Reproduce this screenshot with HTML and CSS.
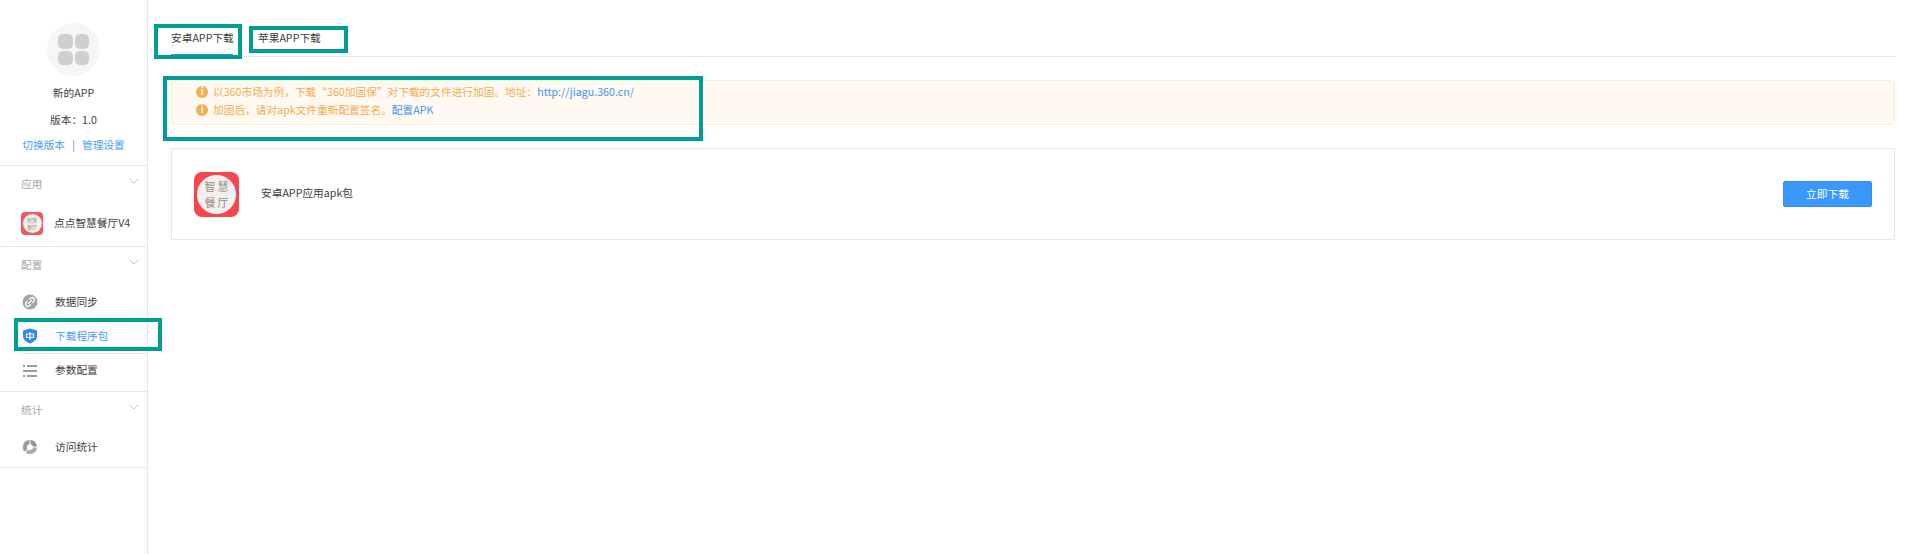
FILE: index.html

```html
<!DOCTYPE html>
<html lang="zh-CN">
<head>
    <meta charset="UTF-8">
    <meta name="viewport" content="width=device-width, initial-scale=1.0">
    <title>下载程序包</title>
    <link rel="stylesheet" href="styles.css">
</head>
<body>
    <div class="page">
        <aside class="sidebar">
            <div class="app-head">
                <div class="app-logo">
                    <span></span><span></span><span></span><span></span>
                </div>
                <div class="app-name">新的APP</div>
                <div class="app-version">版本：1.0</div>
                <div class="app-links"><a>切换版本</a><i>|</i><a>管理设置</a></div>
            </div>

            <section class="side-group group-app">
                <div class="group-title">应用
                    <svg class="chevron" viewBox="0 0 10 6" width="10" height="6"><path d="M0.5 0.5 L5 5 L9.5 0.5" fill="none" stroke="#c4c4c4"/></svg>
                </div>
                <div class="side-item">
                    <div class="mini-icon"><span>智慧<br>餐厅</span></div>
                    <span class="side-label">点点智慧餐厅V4</span>
                </div>
            </section>

            <section class="side-group group-config">
                <div class="group-title">配置
                    <svg class="chevron" viewBox="0 0 10 6" width="10" height="6"><path d="M0.5 0.5 L5 5 L9.5 0.5" fill="none" stroke="#c4c4c4"/></svg>
                </div>
                <div class="side-item">
                    <svg class="side-icon" viewBox="0 0 16 16">
                        <circle cx="8" cy="8" r="7.5" fill="#a3a3a3"/>
                        <path d="M7 5.5 L9 3.8 Q10.5 3 11.8 4.2 Q13 5.5 12.2 7 L10.5 9 M9 10.5 L7 12.2 Q5.5 13 4.2 11.8 Q3 10.5 3.8 9 L5.5 7 M6 10 L10 6" fill="none" stroke="#fff" stroke-width="1.3"/>
                    </svg>
                    <span class="side-label">数据同步</span>
                </div>
                <div class="side-item active">
                    <svg class="side-icon" viewBox="0 0 16 16">
                        <path d="M8 0.500 L15 2.500 V8.500 Q15 12.500 8 15.500 Q1 12.500 1 8.500 V2.500 Z" fill="#2f87f5"/>
                        <path d="M4.500 6 H11.500 V9.500 H4.500 Z M8 4 V12" fill="none" stroke="#fff" stroke-width="1.2"/>
                    </svg>
                    <span class="side-label">下载程序包</span>
                </div>
                <div class="side-item item-line">
                    <svg class="side-icon" viewBox="0 0 16 16">
                        <path d="M1 3 H3 M5 3 H15 M1 8 H15 M1 13 H3 M5 13 H15" stroke="#9d9d9d" stroke-width="1.8"/>
                    </svg>
                    <span class="side-label">参数配置</span>
                </div>
            </section>

            <section class="side-group group-stat">
                <div class="group-title">统计
                    <svg class="chevron" viewBox="0 0 10 6" width="10" height="6"><path d="M0.5 0.5 L5 5 L9.5 0.5" fill="none" stroke="#c4c4c4"/></svg>
                </div>
                <div class="side-item">
                    <svg class="side-icon" viewBox="0 0 16 16">
                        <path d="M8.500 1 A7 7 0 0 1 15 7.500 H11 A3.500 3.500 0 0 0 8.500 5 Z" fill="#8f8f8f"/>
                        <path d="M15 8.500 A7 7 0 0 1 3.500 13.500 L6 10.800 A3.500 3.500 0 0 0 11 8.500 Z" fill="#b5a89c"/>
                        <path d="M2.800 12.800 A7 7 0 0 1 7.500 1 V5 A3.500 3.500 0 0 0 5.300 10 Z" fill="#9a9a9a"/>
                    </svg>
                    <span class="side-label">访问统计</span>
                </div>
            </section>
        </aside>

        <main class="content">
            <div class="tabs">
                <div class="tab current">安卓APP下载</div>
                <div class="tab">苹果APP下载</div>
            </div>

            <div class="notice">
                <p><b class="notice-dot">i</b>以360市场为例，下载“360加固保”对下载的文件进行加固。地址：<a>http://jiagu.360.cn/</a></p>
                <p><b class="notice-dot">i</b>加固后，请对apk文件重新配置签名。<a>配置APK</a></p>
            </div>

            <div class="package-card">
                <div class="package-icon"><span>智慧</span><span>餐厅</span></div>
                <div class="package-name">安卓APP应用apk包</div>
                <button class="download-btn">立即下载</button>
            </div>
        </main>
    </div>

    <!-- teal annotation boxes drawn on top of the screenshot -->
    <div class="mark mark-tab1"></div>
    <div class="mark mark-tab2"></div>
    <div class="mark mark-notice"></div>
    <div class="mark mark-menu"></div>
</body>
</html>
```

FILE: styles.css

```css
* {
    box-sizing: border-box;
}

html, body {
    margin: 0;
    padding: 0;
    height: 100%;
    background-color: #fff;
    overflow: hidden;
}

body {
    font-family: "Noto Sans CJK SC", "Open Sans", sans-serif;
    font-size: 10.7px;
    color: #3d3d3d;
}

.page {
    display: flex;
    height: 554px;
}

/* sidebar */
.sidebar {
    width: 148px;
    flex: none;
    border-right: 1px solid #e7e7e7;
}

.app-head {
    height: 166px;
    padding-top: 23px;
    border-bottom: 1px solid #e7e7e7;
    text-align: center;
    line-height: 16px;
}

.app-logo {
    width: 53px;
    height: 53px;
    margin: 0 auto 9px;
    padding: 11px;
    border-radius: 50%;
    background-color: #f5f6f7;
    display: grid;
    grid-template-columns: 1fr 1fr;
    gap: 2px;
}

.app-logo span {
    border-radius: 5px;
    background-color: #cfcfcf;
}

.app-name {
    margin-bottom: 11px;
}

.app-version {
    margin-bottom: 9px;
}

.app-links a {
    color: #4d9cf8;
}

.app-links i {
    margin: 0 7px;
    font-style: normal;
    color: #4d9cf8;
}

.side-group {
    border-bottom: 1px solid #e7e7e7;
    padding-left: 21px;
}

.group-app {
    height: 81px;
}

.group-app .group-title {
    height: 40px;
}

.group-config {
    height: 145px;
}

.group-stat {
    height: 76px;
}

.group-title {
    height: 38px;
    padding-top: 9px;
    padding-right: 8px;
    color: #a5a5a5;
    line-height: 17px;
    display: flex;
    justify-content: space-between;
    align-items: flex-start;
}

.chevron {
    margin-top: 3px;
}

.side-item {
    height: 34px;
    display: flex;
    align-items: center;
    gap: 17px;
}

.side-label {
    margin-bottom: 2px;
}

.active {
    color: #4d9cf8;
}

.item-line {
    border-top: 1px solid #e7e7e7;
}

.side-icon {
    width: 16px;
    height: 16px;
    margin-left: 1px;
    flex: none;
}

.mini-icon {
    width: 22px;
    height: 23px;
    margin-right: -6px;
    flex: none;
    border-radius: 4px;
    background-color: #f5575c;
    display: flex;
    align-items: center;
    justify-content: center;
}

.mini-icon span {
    width: 19px;
    height: 19px;
    border-radius: 50%;
    background-color: #f1eeec;
    color: #a08a80;
    font-size: 5px;
    line-height: 7px;
    padding-top: 2px;
    text-align: center;
}

/* main area */
.content {
    flex: 1;
    padding: 23px 18px 0 23px;
}

.tabs {
    display: flex;
    gap: 25px;
    height: 34px;
    border-bottom: 1px solid #e7e7e7;
}

.tab {
    width: 62px;
    height: 33px;
    line-height: 30px;
    white-space: nowrap;
}

.current {
    border-bottom: 2px solid #2f8ff5;
}

.notice {
    height: 45px;
    margin-top: 23px;
    padding: 2px 0 0 24px;
    border: 1px solid #fdeccb;
    border-radius: 3px;
    background-color: #fff9f1;
    color: #f0ad4e;
    line-height: 18px;
}

.notice p {
    margin: 0;
    display: flex;
    align-items: center;
}

.notice a {
    color: #3c94f6;
}

.notice-dot {
    width: 12px;
    height: 12px;
    margin-right: 5px;
    border-radius: 50%;
    background-color: #efb04d;
    color: #fff;
    font-size: 9px;
    line-height: 12px;
    text-align: center;
}

.package-card {
    height: 92px;
    margin-top: 23px;
    padding: 0 22px;
    border: 1px solid #e7e7e7;
    display: flex;
    align-items: center;
}

/* the red ring with the white disc is drawn with a radial gradient */
.package-icon {
    width: 45px;
    height: 45px;
    border-radius: 8px;
    background: radial-gradient(circle at center, #f3f1f0 19px, #f5474f 20px);
    display: flex;
    flex-direction: column;
    align-items: center;
    justify-content: center;
    gap: 0;
}

.package-icon span {
    height: 16px;
    overflow: hidden;
    color: #a08a80;
    font-size: 11px;
    line-height: 16px;
    letter-spacing: 2px;
    margin-right: -2px;
}

.package-name {
    margin-left: 22px;
    margin-bottom: 3px;
    flex: 1;
}

.download-btn {
    width: 89px;
    height: 26px;
    padding: 0 0 2px;
    border: 1px solid #2f8ff5;
    border-radius: 2px;
    background-color: #3a97fc;
    color: #fff;
    font-family: inherit;
    font-size: 10.7px;
}

/* annotation boxes */
.mark {
    position: absolute;
    border: 4px solid #009c96;
}

.mark-tab1 {
    left: 154px;
    top: 24px;
    width: 88px;
    height: 35px;
}

.mark-tab2 {
    left: 249px;
    top: 26px;
    width: 99px;
    height: 27px;
}

.mark-notice {
    left: 163px;
    top: 76px;
    width: 540px;
    height: 65px;
}

.mark-menu {
    left: 14px;
    top: 318px;
    width: 148px;
    height: 33px;
}
```
